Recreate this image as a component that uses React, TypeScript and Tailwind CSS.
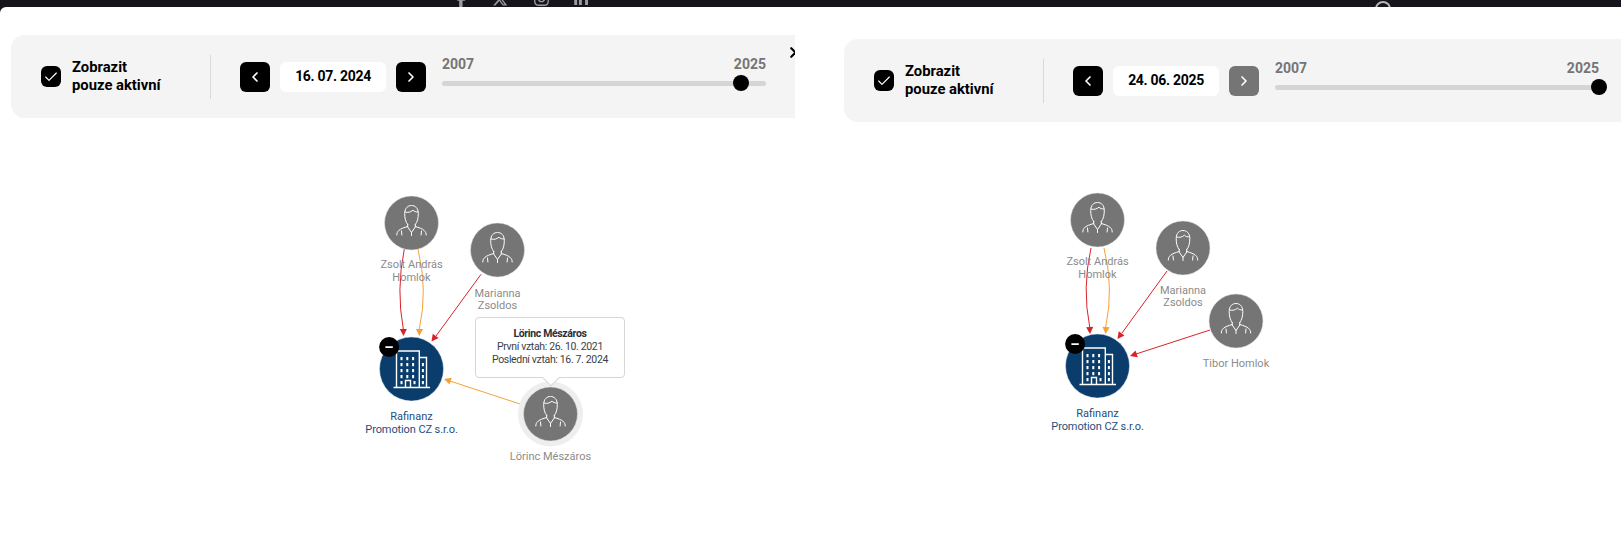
import React from 'react';
import { Check, ChevronLeft, ChevronRight, X } from 'lucide-react';
import { FaFacebookF, FaInstagram, FaLinkedinIn, FaXTwitter } from 'react-icons/fa6';

const RED = '#d8232a';
const ORANGE = '#f5a138';

type Person = { x: number; y: number; lines: string[]; labelY: number; labelX?: number; halo?: boolean };
type Edge = { d: string; color: string; tipX: number; tipY: number; fromX: number; fromY: number };

const PersonNode: React.FC<Person> = ({ x, y, lines, labelY, labelX, halo }) => (
  <g>
    {halo && <circle cx={x} cy={y} r={32.5} fill="#eeeeee" />}
    <circle cx={x} cy={y} r={27} fill="#757575" stroke="#e5e5e5" strokeWidth={0.5} />
    <g transform={`translate(${x} ${y})`} fill="none" stroke="#fff" strokeWidth={1} strokeLinecap="round" strokeLinejoin="round">
      <path d="M-3.8 1.5C-6 -1 -6.8 -5 -6.8 -9.5C-6.8 -15 -3.6 -17.5 0 -17.5C3.6 -17.5 6.8 -15 6.8 -9.5C6.8 -5 6 -1 3.8 1.5" />
      <path d="M-6.5 -11C-3 -10 -1 -11 1.5 -12.8C2.5 -11.5 4.5 -11 6.5 -11" />
      <path d="M-3.8 1.5L-3.8 4L0 9.5L3.8 4L3.8 1.5" />
      <path d="M0 9.5L0 12.5M-14.7 12C-14.7 8 -12.5 6 -3.8 3.5M14.7 12C14.7 8 12.5 6 3.8 3.5M-10 8L-9.6 12M10 8L9.6 12" />
    </g>
    {lines.map((line, i) => (
      <text key={line} x={labelX ?? x} y={labelY + i * 12.5} textAnchor="middle" fontSize={11} fill="#8b8b8b">
        {line}
      </text>
    ))}
  </g>
);

const windows = [-12, -6, 0, 6].flatMap((y) => [-11, -5.2, 0.6].map((x) => [x, y]));

const CompanyNode: React.FC<{ x: number; y: number }> = ({ x, y }) => (
  <g>
    <circle cx={x} cy={y} r={32} fill="#0a3d6b" stroke="#dfe6ec" strokeWidth={0.5} />
    <g transform={`translate(${x} ${y})`}>
      <g fill="none" stroke="#fff" strokeWidth={1.4}>
        <path d="M-18 18.5H18.5M-15 18.5V-18H7.8V18.5M7.8 -11.5H15V18.5M-6 18.5V11.5H-1V18.5" />
      </g>
      {windows.map(([wx, wy]) => (
        <rect key={`${wx}-${wy}`} x={wx} y={wy} width={2} height={3.2} fill="#fff" />
      ))}
      <rect x={-11} y={12} width={2} height={3.2} fill="#fff" />
      <rect x={2} y={12} width={2} height={3.2} fill="#fff" />
      {[-6, 0, 6, 12].map((wy) => (
        <rect key={wy} x={10.4} y={wy} width={2} height={3.2} fill="#fff" />
      ))}
    </g>
    <circle cx={x - 22.4} cy={y - 22} r={10} fill="#000" />
    <rect x={x - 26.4} y={y - 22.8} width={8} height={1.7} rx={0.8} fill="#fff" />
    <text x={x} y={y + 50.5} textAnchor="middle" fontSize={11} fill="#1f4e7d">Rafinanz</text>
    <text x={x} y={y + 63.5} textAnchor="middle" fontSize={11} letterSpacing={-0.1} fill="#1f4e7d">Promotion CZ s.r.o.</text>
  </g>
);

const EdgeLine: React.FC<Edge> = ({ d, color, tipX, tipY, fromX, fromY }) => {
  const angle = (Math.atan2(tipY - fromY, tipX - fromX) * 180) / Math.PI;
  return (
    <g>
      <path d={d} fill="none" stroke={color} strokeWidth={1} />
      <path transform={`translate(${tipX} ${tipY}) rotate(${angle})`} d="M0 0L-7 -3.6L-7 3.6Z" fill={color} />
    </g>
  );
};

type PanelProps = {
  className: string;
  offsetX: number;
  offsetY: number;
  date: string;
  nextDisabled?: boolean;
  showClose?: boolean;
  thumb: number;
  people: Person[];
  edges: Edge[];
  company: { x: number; y: number };
  children?: React.ReactNode;
};

const Panel: React.FC<PanelProps> = ({ className, offsetX, offsetY, date, nextDisabled, showClose, thumb, people, edges, company, children }) => (
  <div className={`relative h-[551px] overflow-hidden ${className}`}>
    <div className="relative flex h-[83px] w-[800px] items-center rounded-[14px] bg-[#f4f4f4] pl-[30px]">
      <span className="flex h-[21px] w-[20px] items-center justify-center rounded-[6px] bg-black">
        <Check size={16} strokeWidth={1.75} className="text-white" />
      </span>
      <span className="ml-[11px] w-[138px] text-[14.8px] leading-[17.5px] font-bold text-black">
        Zobrazit
        <br />
        pouze aktivní
      </span>
      <span className="h-[44px] w-px bg-[#d9d9d9]" />
      <button className="ml-[29px] flex h-[30px] w-[30px] items-center justify-center rounded-[6px] bg-black text-white">
        <ChevronLeft size={16} strokeWidth={2.5} />
      </button>
      <span className="ml-[10px] flex h-[30px] w-[106px] items-center justify-center rounded-[6px] bg-white text-[14px] font-bold tracking-[-0.3px] text-black">
        {date}
      </span>
      <button className={`ml-[10px] flex h-[30px] w-[30px] items-center justify-center rounded-[6px] text-white ${nextDisabled ? 'bg-[#757575]' : 'bg-black'}`}>
        <ChevronRight size={16} strokeWidth={2.5} />
      </button>
      <div className="ml-[16px] w-[324px]">
        <div className="flex justify-between pt-[1px] text-[14px] leading-[17px] font-bold text-[#757575]">
          <span>2007</span>
          <span>2025</span>
        </div>
        <div className="relative mt-[8px] mb-[13px] h-[5px] rounded-full bg-[#d5d5d5]">
          <span className="absolute top-[-6px] ml-[-8px] h-4 w-4 rounded-full bg-black" style={{ left: `${thumb}%` }} />
        </div>
      </div>
      {showClose && <X size={17} strokeWidth={3} className="absolute top-[9px] left-[776px] text-black" />}
    </div>
    <svg className="absolute top-0 left-0 h-[551px] w-[830px]" style={{ fontFamily: 'Roboto, sans-serif' }}>
      <g transform={`translate(${-offsetX} ${-offsetY})`}>
        {edges.map((edge) => (
          <EdgeLine key={edge.d} {...edge} />
        ))}
        {people.map((person) => (
          <PersonNode key={person.lines.join()} {...person} />
        ))}
        <CompanyNode {...company} />
      </g>
    </svg>
    {children}
  </div>
);

export default function App() {
  return (
    <div className="min-h-[558px] bg-[#16151c] font-['Roboto',sans-serif]">
      <div className="relative h-[7px] overflow-hidden">
        <div className="flex h-[7px] items-end pl-[454px] text-[#9b9ba1]">
          <FaFacebookF size={15} />
          <FaXTwitter size={16} className="ml-[23px]" />
          <FaInstagram size={17} className="ml-[25px]" />
          <FaLinkedinIn size={16} className="ml-[23px]" />
          <span className="mb-[-16px] ml-[786px] h-[22px] w-[16px] rounded-full border-2 border-[#b5b5b8]" />
        </div>
      </div>
      <div className="flex rounded-tl-[6px] bg-white">
        <Panel
          className="w-[795px] pt-[28px] pl-[11px]"
          offsetX={0}
          offsetY={7}
          date="16. 07. 2024"
          showClose
          thumb={92.3}
          company={{ x: 411.5, y: 369 }}
          people={[
            { x: 411.5, y: 223, lines: ['Zsolt András', 'Homlok'], labelY: 268 },
            { x: 497.5, y: 250, lines: ['Marianna', 'Zsoldos'], labelY: 296.5 },
            { x: 550.5, y: 414, lines: ['Lörinc Mészáros'], labelY: 460, halo: true },
          ]}
          edges={[
            { d: 'M404.3 249Q396 290 403.3 329', color: RED, tipX: 403.5, tipY: 336, fromX: 403.3, fromY: 329 },
            { d: 'M418 249Q428 290 419.3 329', color: ORANGE, tipX: 419.3, tipY: 336, fromX: 419.5, fromY: 329 },
            { d: 'M481 274.3L436 336', color: RED, tipX: 431.5, tipY: 341.5, fromX: 481, fromY: 274.3 },
            { d: 'M520 404L450 381', color: ORANGE, tipX: 444, tipY: 379, fromX: 520, fromY: 404 },
          ]}
        >
          <div className="absolute top-[310px] left-[475px] h-[61px] w-[150px] rounded-[4px] border border-[#d6d6d6] bg-white pt-[9px] text-center text-[10.5px] leading-[13px] tracking-[-0.35px] text-[#3a3f47]">
            <div className="font-bold text-[#2b303a]">Lörinc Mészáros</div>
            <div>První vztah: 26. 10. 2021</div>
            <div>Poslední vztah: 16. 7. 2024</div>
            <span className="absolute bottom-[-7px] left-[69px] h-[12px] w-[12px] rotate-45 border-r border-b border-[#d6d6d6] bg-white" />
          </div>
        </Panel>
        <Panel
          className="w-[826px] pt-[32px] pl-[49px]"
          offsetX={795}
          offsetY={7}
          date="24. 06. 2025"
          nextDisabled
          thumb={100}
          company={{ x: 1097.5, y: 366 }}
          people={[
            { x: 1097.5, y: 220, lines: ['Zsolt András', 'Homlok'], labelY: 265 },
            { x: 1183, y: 248, lines: ['Marianna', 'Zsoldos'], labelY: 293.5 },
            { x: 1236, y: 321, lines: ['Tibor Homlok'], labelY: 367 },
          ]}
          edges={[
            { d: 'M1091 248Q1082 288 1089.7 327', color: RED, tipX: 1090, tipY: 334, fromX: 1089.7, fromY: 327 },
            { d: 'M1104 248Q1114 288 1105.7 327', color: ORANGE, tipX: 1105.7, tipY: 334, fromX: 1106, fromY: 327 },
            { d: 'M1167 271L1122 333', color: RED, tipX: 1117.5, tipY: 339, fromX: 1167, fromY: 271 },
            { d: 'M1210 330L1136 354', color: RED, tipX: 1130, tipY: 356, fromX: 1210, fromY: 330 },
          ]}
        />
      </div>
    </div>
  );
}
